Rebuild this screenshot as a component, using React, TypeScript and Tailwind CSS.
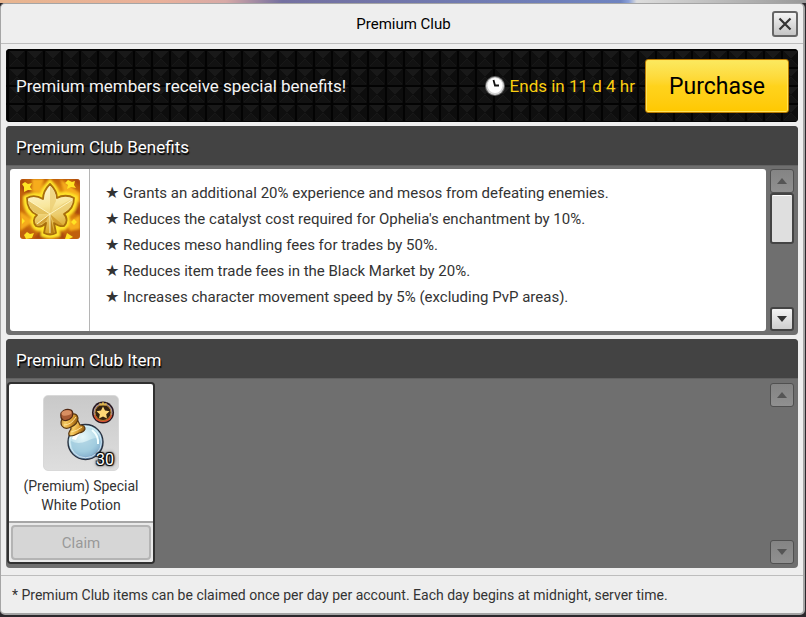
import { useState } from 'react';
import type { ReactNode } from 'react';

const BENEFITS = [
  'Grants an additional 20% experience and mesos from defeating enemies.',
  "Reduces the catalyst cost required for Ophelia's enchantment by 10%.",
  'Reduces meso handling fees for trades by 50%.',
  'Reduces item trade fees in the Black Market by 20%.',
  'Increases character movement speed by 5% (excluding PvP areas).',
];

function StudPattern() {
  return (
    <svg className="absolute inset-0 w-full h-full" aria-hidden="true">
      <defs>
        <pattern id="studs" x="3" y="1" width="18" height="18" patternUnits="userSpaceOnUse">
          <rect width="18" height="18" fill="#030303" />
          <path d="M0 1H16L8 9Z" fill="#191919" />
          <path d="M0 1L8 9L0 17Z" fill="#0f0f0f" />
          <path d="M16 1V17L8 9Z" fill="#0d0d0d" />
          <path d="M0 17L8 9L16 17Z" fill="#121212" />
          <path d="M1 16L8 9L15 16" fill="none" stroke="#1e1e1e" strokeWidth="0.6" />
        </pattern>
      </defs>
      <rect width="100%" height="100%" fill="url(#studs)" />
    </svg>
  );
}

function ClockIcon() {
  return (
    <svg width="22" height="22" viewBox="0 0 22 22" aria-hidden="true">
      <circle cx="11" cy="11" r="10" fill="#666" />
      <circle cx="11" cy="11" r="9" fill="#d4d4d4" />
      <circle cx="11" cy="10.5" r="7.5" fill="#fff" />
      <path d="M9.5 5L11 10.500H15" fill="none" stroke="#111" strokeWidth="1.8" />
    </svg>
  );
}

function LeafIcon() {
  return (
    <svg width="60" height="60" viewBox="0 0 60 60" aria-hidden="true" className="rounded-[3px]">
      <defs>
        <radialGradient id="leafBg">
          <stop offset="0" stopColor="#fff03c" />
          <stop offset="0.55" stopColor="#efa512" />
          <stop offset="1" stopColor="#c0600c" />
        </radialGradient>
        <linearGradient id="leafFill" x1="0" y1="0" x2="0.2" y2="1">
          <stop offset="0" stopColor="#fffbe0" />
          <stop offset="0.5" stopColor="#f8e69c" />
          <stop offset="1" stopColor="#d9a525" />
        </linearGradient>
        <filter id="leafGlow" x="-20%" y="-20%" width="140%" height="140%">
          <feGaussianBlur stdDeviation="1.3" />
        </filter>
      </defs>
      <rect width="60" height="60" fill="url(#leafBg)" />
      <g filter="url(#leafGlow)">
        <path d="M12 0H24L20 14L12 12ZM40 0L60 14V24L44 14ZM0 32L14 42L0 52ZM46 44L60 36V50L50 52Z" fill="#f6ac1a" />
        <path d="M0 10L12 16L4 0H0ZM52 0H60V8ZM60 24V36L54 34ZM14 60L20 52L26 60ZM38 60L42 52L46 60Z" fill="#a9470a" />
        <path
          d="M30 4C34 8 37 12 37 18C42 15 49 16 55 19C55 28 51 33 45 36C48 40 47 45 44 48C41 49 38 48 36 46L37 55Q30 58 24 55L25 46C22 49 19 50 16 48C13 45 13 40 16 37C9 34 6 28 6 19C12 16 18 16 23 19C22 13 26 8 30 4Z"
          fill="#fff02e"
          stroke="#ffe42a"
          strokeWidth="6"
        />
      </g>
      <path d="M5 3L8 5L12 4L10 8L12 11L8 11L4 13L4 8L2 5ZM48 1L52 3L55 2L54 6L56 9L51 8L47 10L48 6L45 4ZM7 53L10 55L14 54L12 59L6 60L4 56ZM47 54L50 56L53 58L49 60H45ZM54 40L57 43L54 46L51 43ZM2 39L5 42L2 45Z" fill="#ffe324" />
      <path
        d="M30 5C34 9 37 13 37 19C42 16 49 16 54 19C54 28 50 32 44 35C48 39 47 44 44 47C40 48 37 46 34 44L36 54Q30 57 24 54L26 44C23 47 20 49 16 47C13 44 13 39 17 36C10 33 7 28 7 19C12 16 18 17 23 20C23 13 26 9 30 5Z"
        fill="url(#leafFill)"
        stroke="#a86e0c"
        strokeWidth="1.8"
        strokeLinejoin="round"
      />
      <path d="M30 7V35L36 22Q36 12 30 7ZM53 20Q45 22 30 35L45 33Q52 28 53 20Z" fill="#ebce73" opacity="0.75" />
      <path d="M8 21L30 35L18 35Q9 31 8 21Z" fill="#dfb850" opacity="0.75" />
      <path d="M30 35L43 46Q38 47 33 42ZM30 35L16 46Q20 47 26 42Z" fill="#c78e1d" opacity="0.65" />
      <path d="M30 35L34 54H30Z" fill="#a96f0a" opacity="0.7" />
      <path d="M30 35L8 21M30 35L52 21M30 35L17 45M30 35V54" fill="none" stroke="#fff7c6" strokeWidth="0.9" />
    </svg>
  );
}

function PotionIcon() {
  return (
    <svg className="absolute inset-0" width="76" height="76" viewBox="0 0 76 76" aria-hidden="true">
      <defs>
        <radialGradient id="glass" cx="0.42" cy="0.35" r="0.65">
          <stop offset="0" stopColor="#e6f7fa" />
          <stop offset="0.65" stopColor="#b5dbe8" />
          <stop offset="1" stopColor="#7197c0" />
        </radialGradient>
        <linearGradient id="brass" x1="0" y1="0" x2="1" y2="0.3">
          <stop offset="0" stopColor="#a56819" />
          <stop offset="0.4" stopColor="#f8cf67" />
          <stop offset="0.7" stopColor="#dc9f35" />
          <stop offset="1" stopColor="#98600f" />
        </linearGradient>
      </defs>
      <circle cx="41.500" cy="46" r="17.500" fill="url(#glass)" stroke="#293240" strokeWidth="1.4" />
      <circle cx="41.500" cy="46" r="15.800" fill="none" stroke="#e2f4fa" strokeWidth="0.8" />
      <path d="M27 45Q34 49 43 45T56 42Q59 51 51 57Q42 64 32 57Q27 52 27 45Z" fill="#8ebdd5" opacity="0.5" />
      <path d="M28 43Q30 36 36 34L40 35Q34 38 32 44Z" fill="#fff" />
      <path d="M48 34Q55 40 54 48" stroke="#f3ffff" strokeWidth="2" fill="none" />
      <path
        d="M26 27L34 25L36 29Q41 29 41 33Q40 36 35 37Q30 40 26 40Q23 38 27 33Z"
        fill="url(#brass)"
        stroke="#593710"
        strokeWidth="1.2"
      />
      <path d="M18 23Q22 25 28 18Q33 17 34 22Q34 28 27 31Q21 34 18 30Q16 27 18 23Z" fill="url(#brass)" stroke="#593710" strokeWidth="1.2" />
      <path d="M20 29Q27 29 32 21M27 36Q33 35 38 31" fill="none" stroke="#ffe49a" strokeWidth="1" />
      <path d="M17 17Q21 12 27 14Q30 16 28 21Q24 26 19 24Q16 22 17 17Z" fill="#a85b35" stroke="#512812" strokeWidth="1.2" />
      <ellipse cx="22.500" cy="17" rx="5" ry="2.600" fill="#d98f62" transform="rotate(-8 22 17)" />
      <circle cx="59" cy="16.500" r="11" fill="#27171f" />
      <circle cx="59" cy="16.500" r="9.500" fill="#a99aa4" />
      <path d="M49.500 18Q59 28 68.500 18Q67 26 59 26T49.500 18Z" fill="#dd4a29" />
      <circle cx="59" cy="16.500" r="8" fill="#352310" stroke="#b57a27" strokeWidth="1" />
      <path d="M59 10.500L61 14.500L65.500 15.200L62.200 18.200L63 22.500L59 20.500L55 22.500L55.800 18.200L52.500 15.200L57 14.500Z" fill="#ffd976" />
      <path d="M55.500 6.500L57.500 8L59 5.500L60.500 8L62.500 6.500V9.500H55.500Z" fill="#dcb44b" />
    </svg>
  );
}

interface ScrollButtonProps {
  direction: 'up' | 'down';
  label: string;
  disabled?: boolean;
}

function ScrollButton({ direction, label, disabled }: ScrollButtonProps) {
  return (
    <button
      type="button"
      aria-label={label}
      disabled={disabled}
      className="flex h-6 w-6 shrink-0 items-center justify-center rounded-[3px] border-2 border-[#444] bg-linear-to-b from-[#f3f3f3] to-[#cfcfcf] text-[#333] disabled:border disabled:border-[#505050] disabled:from-[#848484] disabled:to-[#909090] disabled:text-[#555]"
    >
      <svg width="10" height="6" viewBox="0 0 10 6" aria-hidden="true">
        <path d={direction === 'up' ? 'M5 0L10 6H0Z' : 'M0 0H10L5 6Z'} fill="currentColor" />
      </svg>
    </button>
  );
}

function Panel({ title, className = '', children }: { title: string; className?: string; children: ReactNode }) {
  return (
    <section className={`flex flex-col overflow-hidden rounded-[4px] bg-[#6f6f6f] ${className}`}>
      <h2 className="h-10 shrink-0 border-b border-[#626262] bg-[#434343] px-[10px] text-[17px] leading-[42px] text-white [text-shadow:1px_2px_1px_#000]">
        {title}
      </h2>
      {children}
    </section>
  );
}

export default function App() {
  const [open, setOpen] = useState(true);

  return (
    <div className="flex min-h-screen flex-col bg-[#2b282c] bg-[linear-gradient(to_right,#e8b58f,#e9b09a_20%,#d7a9a6_28%,#7470a0_35%,#6e83c0_77%,#8aa0d8_78%,#ddd_79%,#999)] bg-[length:100%_3px] bg-no-repeat pb-[2px] pt-[3px] font-[Roboto,sans-serif]">
      {open && (
        <main className="mr-px flex flex-1 flex-col rounded-[5px] border-b-2 border-l border-r-2 border-t border-[#a5a5a5] bg-[#eee]">
          <header className="flex h-10 items-center border-b border-[#bdbdbd] pl-[34px] pr-[5px]">
            <h1 className="flex-1 pt-px text-center text-[15px] leading-5 text-black">Premium Club</h1>
            <button
              type="button"
              aria-label="Close"
              onClick={() => setOpen(false)}
              className="flex h-[26px] w-[26px] items-center justify-center rounded-[3px] border-2 border-[#666] bg-linear-to-b from-[#f4f4f4] to-[#c5c5c5]"
            >
              <svg width="14" height="14" viewBox="0 0 14 14" aria-hidden="true">
                <path d="M1.500 1.500L12.500 12.500M12.500 1.500L1.500 12.500" stroke="#333" strokeWidth="2.200" />
              </svg>
            </button>
          </header>

          <div className="flex flex-1 flex-col gap-1 px-[5px] pb-[7px] pt-[5px]">
            {/* Subscription banner */}
            <section className="relative h-[73px] overflow-hidden rounded-[4px] bg-black">
              <StudPattern />
              <div className="relative flex h-full items-center pl-[10px] pr-[9px]">
                <p className="flex-1 text-[17px] leading-6 text-[#f4f4f4]">Premium members receive special benefits!</p>
                <ClockIcon />
                <p className="ml-1 mr-[10px] text-[17px] leading-6 text-[#fbce10]">Ends in 11 d 4 hr</p>
                <button
                  type="button"
                  className="h-[54px] w-36 rounded-[3px] border border-[#b87a00] bg-linear-to-b from-[#fbe95f] via-[#ffd31c] to-[#ffc800] pt-[3px] text-[23px] leading-7 text-black shadow-[inset_0_0_0_1px_#ffe458]"
                >
                  Purchase
                </button>
              </div>
            </section>

            <Panel title="Premium Club Benefits">
              <div className="flex gap-1 p-1 pt-[3px]">
                <div className="flex flex-1 rounded-[3px] bg-white">
                  <div className="border-r border-[#b5b5b5] py-[10px] pl-[10px] pr-[9px]">
                    <LeafIcon />
                  </div>
                  <ul className="flex-1 px-[15px] pb-[21px] pt-[11px] text-[15px] leading-[26px] text-[#333]">
                    {BENEFITS.map((benefit) => (
                      <li key={benefit}>
                        <span className="inline-block w-[18px] text-[16px]">★</span>
                        {benefit}
                      </li>
                    ))}
                  </ul>
                </div>
                <div className="flex flex-col justify-between">
                  <div className="flex flex-col">
                    <ScrollButton direction="up" label="Scroll benefits up" disabled />
                    <div className="h-[51px] w-6 rounded-[3px] border-2 border-[#444] bg-[#dfdfdf] shadow-[inset_0_1px_0_#fff]" />
                  </div>
                  <ScrollButton direction="down" label="Scroll benefits down" />
                </div>
              </div>
            </Panel>

            <Panel title="Premium Club Item" className="flex-1">
              <div className="flex flex-1 justify-between pb-1 pl-px pr-1 pt-[3px]">
                <article className="flex w-[148px] flex-col rounded-[4px] border-2 border-[#303030] bg-white">
                  <div className="flex flex-1 flex-col items-center border-b-2 border-[#a6a6a6] pt-[11px]">
                    <div className="relative h-[76px] w-[76px] rounded-[5px] border border-[#d9d9d9] bg-linear-to-b from-[#c9c9c9] to-[#dedede]">
                      <PotionIcon />
                      <span className="absolute bottom-0 right-1 text-[16px] leading-5 text-white [text-shadow:1px_1px_1px_#000,-1px_-1px_1px_#000,1px_-1px_1px_#000,-1px_1px_1px_#000,0_0_4px_#000]">
                        30
                      </span>
                    </div>
                    <h3 className="mt-[6px] text-center text-[14px] leading-[19px] text-[#333]">
                      (Premium) Special
                      <br />
                      White Potion
                    </h3>
                  </div>
                  <div className="rounded-b-[3px] bg-[#e9e9e9] p-[2px]">
                    <button
                      type="button"
                      disabled
                      className="h-[35px] w-full rounded-[4px] border-2 border-[#b4b4b4] bg-[#d6d6d6] text-[15px] leading-5 text-[#999]"
                    >
                      Claim
                    </button>
                  </div>
                </article>
                <div className="flex flex-col justify-between pt-px">
                  <ScrollButton direction="up" label="Scroll items up" disabled />
                  <ScrollButton direction="down" label="Scroll items down" disabled />
                </div>
              </div>
            </Panel>
          </div>

          <footer className="border-t border-[#bdbdbd] px-[11px] pb-2 pt-[9px]">
            <p className="text-[14px] leading-5 text-[#333]">
              * Premium Club items can be claimed once per day per account. Each day begins at midnight, server time.
            </p>
          </footer>
        </main>
      )}
    </div>
  );
}
